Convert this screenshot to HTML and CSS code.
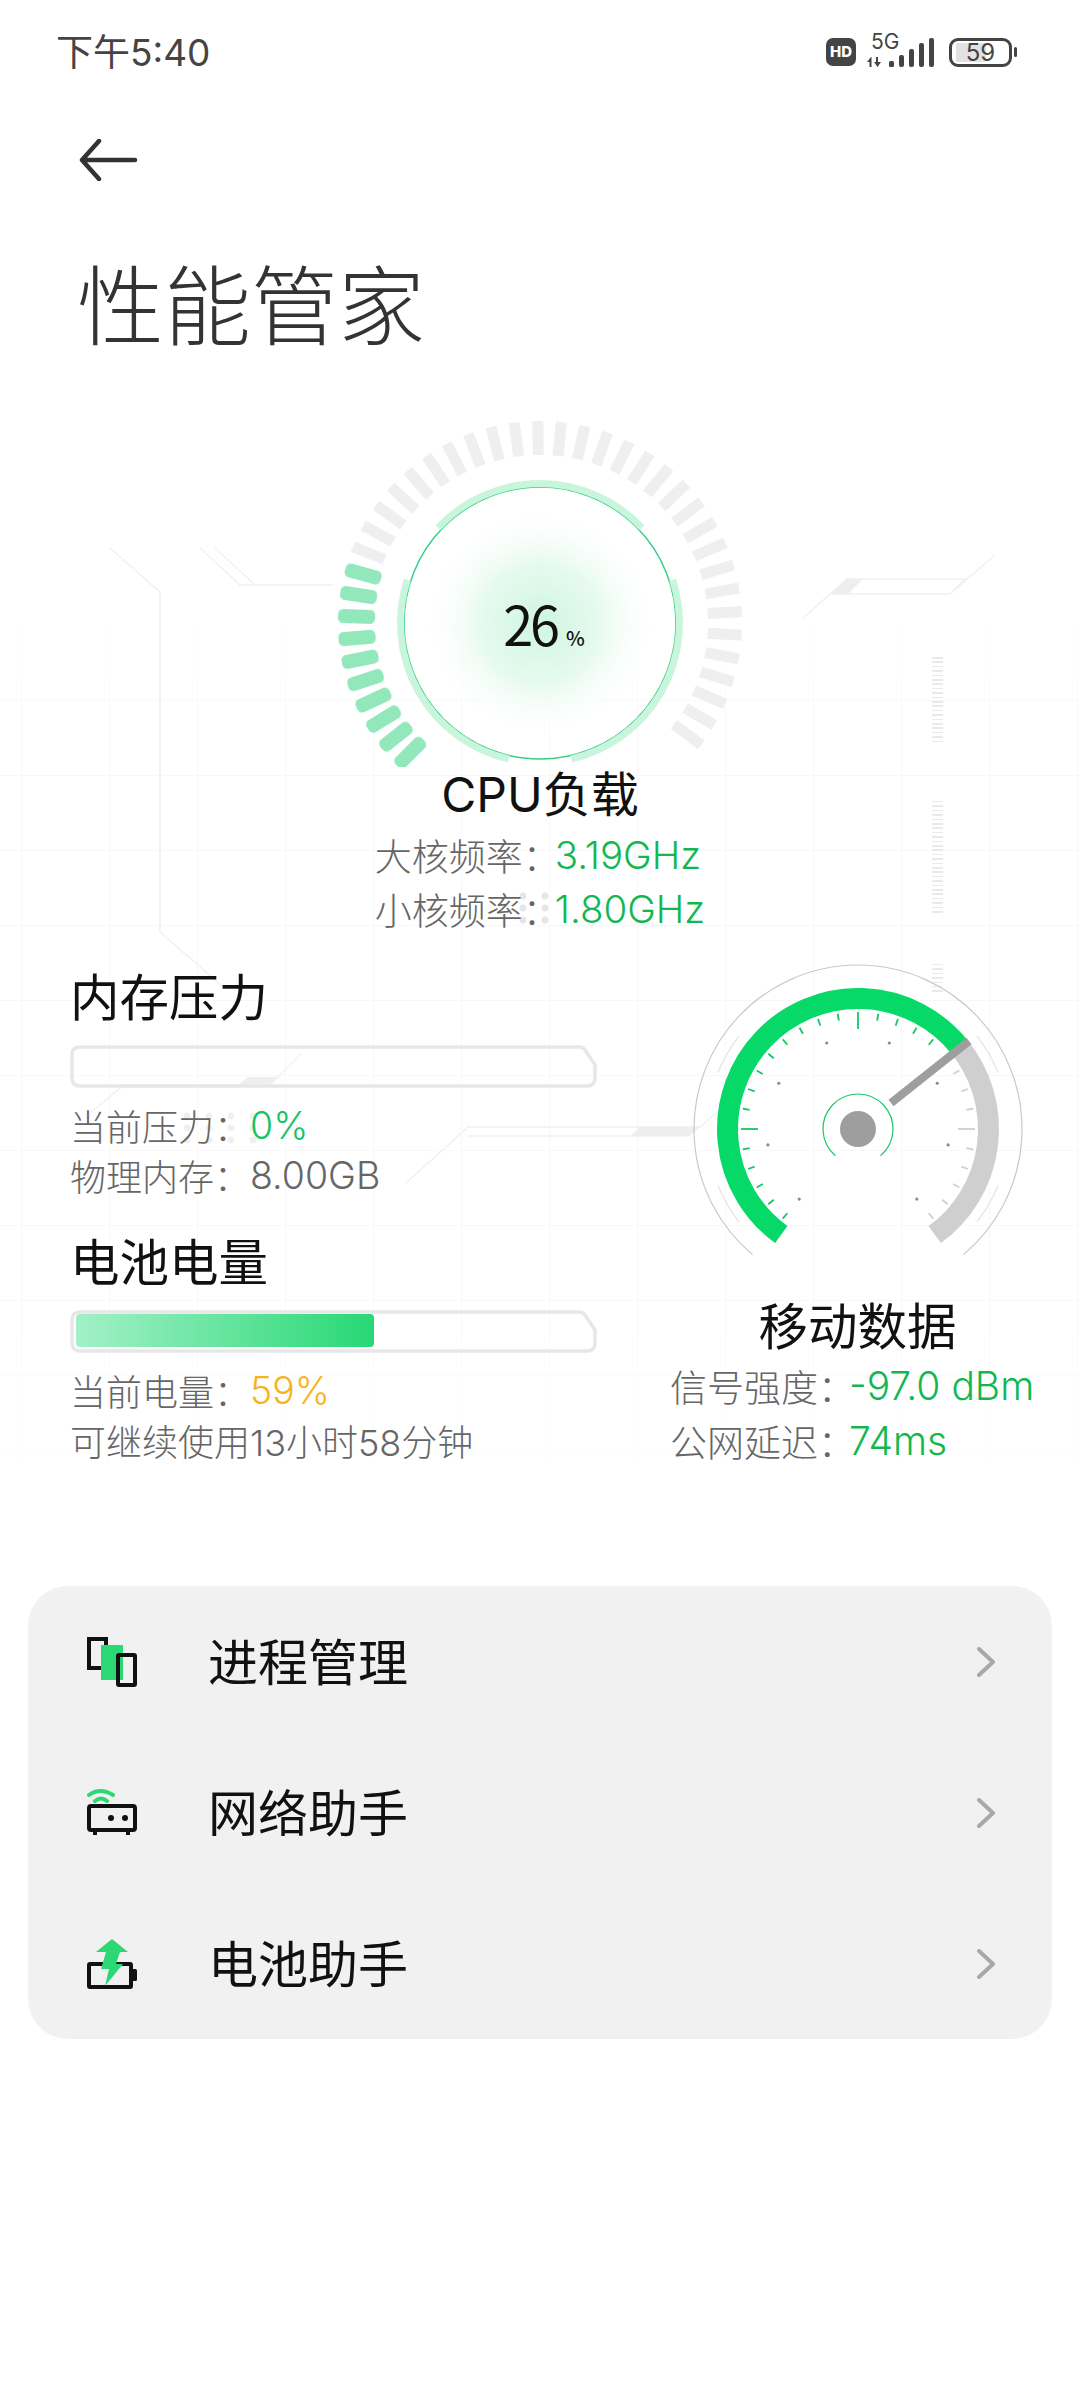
FILE: index.html
```html
<!DOCTYPE html>
<html lang="zh-CN">
<head>
    <meta charset="UTF-8">
    <meta name="viewport" content="width=device-width, initial-scale=1.0">
    <title>性能管家</title>
    <link rel="stylesheet" href="styles.css">
</head>
<body>

    <!-- Background decoration -->
    <div class="bg-grid"></div>
    <svg class="bg-lines" width="1080" height="1300" viewBox="0 0 1080 1300">
        <path d="M110 548 160 592V932L223 987"/>
        <path d="M200 548 240 585H333M215 548 255 585"/>
        <path d="M802 619 830 594H950L995 555M830 594 847 579H965L950 594"/>
        <path class="bg-fill" d="M830 594 847 579H863L848 594Z"/>
        <path d="M90 1113 124 1085H270L302 1053"/>
        <path class="bg-fill" d="M238 1085 248 1077H278L268 1085Z"/>
        <path d="M406 1183 468 1127H700L753 1080M468 1136H687"/>
        <path class="bg-fill" d="M630 1136 640 1127H700L690 1136Z"/>
    </svg>
    <div class="ruler ruler-a"></div>
    <div class="ruler ruler-b"></div>
    <div class="ruler ruler-c"></div>
    <div class="dots dots-cpu"></div>
    <div class="dots dots-mem"></div>

    <!-- Status bar -->
    <div class="status">
        <span class="status-time">下午5:40</span>
        <div class="status-icons">
            <span class="hd">HD</span>
            <svg class="signal" width="70" height="42" viewBox="0 -6 70 42">
                <text x="5" y="15">5G</text>
                <path d="M5 23 1 28H3.500V33H5.500V23ZM10 23V28H8L11.500 33 15 28H12V23Z"/>
                <rect x="23" y="27" width="5" height="6" rx="1.5"/>
                <rect x="33" y="21" width="5" height="12" rx="2"/>
                <rect x="43" y="15" width="5" height="18" rx="2"/>
                <rect x="53" y="9" width="5" height="24" rx="2"/>
                <rect x="63" y="4" width="5" height="29" rx="2"/>
            </svg>
            <div class="battery"><span class="battery-level"></span><span class="battery-num">59</span></div>
            <span class="battery-nub"></span>
        </div>
    </div>

    <!-- Header -->
    <div class="back">
        <svg width="60" height="42" viewBox="0 0 60 42">
            <path d="M20 2 3 21 20 40M3 21H56"/>
        </svg>
    </div>
    <h1 class="title">性能管家</h1>

    <!-- CPU -->
    <section class="cpu">
        <div class="cpu-gauge">
            <svg id="cpu-svg" width="440" height="347" viewBox="0 0 440 347">
                <defs>
                    <radialGradient id="glow">
                        <stop offset="0" stop-color="#cff5e0"/>
                        <stop offset="0.5" stop-color="#e6faef"/>
                        <stop offset="1" stop-color="#ffffff" stop-opacity="0"/>
                    </radialGradient>
                </defs>
                <circle cx="220" cy="203" r="118" fill="url(#glow)"/>
                <circle class="cpu-ring" cx="220" cy="203" r="136"/>
            </svg>
            <div class="cpu-value">26<small>%</small></div>
        </div>
        <h2 class="block-title">CPU负载</h2>
        <div class="cpu-stats">
            <div class="row"><span class="label label-cpu">大核频率：</span><span class="val green">3.19GHz</span></div>
            <div class="row"><span class="label label-cpu">小核频率：</span><span class="val green">1.80GHz</span></div>
        </div>
    </section>

    <!-- Memory, battery, network -->
    <section class="overview">
        <div class="left-col">
            <h2 class="block-title">内存压力</h2>
            <div class="bar">
                <svg class="bar-frame" width="527" height="43" viewBox="0 0 527 43">
                    <path d="M10 2H510Q513 2 515 5L525 20V33Q525 41 517 41H10Q2 41 2 33V10Q2 2 10 2Z"/>
                </svg>
            </div>
            <div class="row row-left"><span class="label">当前压力：</span><span class="val green-light">0%</span></div>
            <div class="row row-left"><span class="label">物理内存：</span><span class="val">8.00GB</span></div>

            <h2 class="block-title battery-title">电池电量</h2>
            <div class="bar">
                <svg class="bar-frame" width="527" height="43" viewBox="0 0 527 43">
                    <path d="M10 2H510Q513 2 515 5L525 20V33Q525 41 517 41H10Q2 41 2 33V10Q2 2 10 2Z"/>
                </svg>
                <div class="bar-fill" style="width: 298px"></div>
            </div>
            <div class="row row-left"><span class="label">当前电量：</span><span class="val orange">59%</span></div>
            <div class="row row-left"><span class="label">可继续使用13小时58分钟</span></div>
        </div>

        <div class="right-col">
            <svg id="net-svg" width="340" height="300" viewBox="0 0 340 300">
                <path id="net-outer" class="net-thin"/>
                <path id="net-green" class="net-arc green-arc"/>
                <path id="net-gray" class="net-arc gray-arc"/>
                <path id="net-hub-arc" class="hub-arc"/>
                <circle class="hub" cx="170" cy="168" r="18"/>
                <path class="needle" d="M203 142 281 80"/>
            </svg>
            <h2 class="block-title net-title">移动数据</h2>
            <div class="net-stats">
                <div class="row"><span class="label label-net">信号强度：</span><span class="val green">-97.0 dBm</span></div>
                <div class="row"><span class="label label-net">公网延迟：</span><span class="val green">74ms</span></div>
            </div>
        </div>
    </section>

    <!-- Tools -->
    <div class="card">
        <div class="card-row">
            <svg class="card-icon" width="50" height="50" viewBox="0 0 50 50">
                <rect class="i-fill" x="14" y="8" width="22" height="35"/>
                <path class="i-line" d="M14 31H2V2H19V8"/>
                <rect class="i-line" x="31" y="18" width="17" height="30" rx="1"/>
            </svg>
            <span class="card-label">进程管理</span>
            <svg class="chevron" width="20" height="30" viewBox="0 0 20 30"><path d="M2 2 16 15 2 28"/></svg>
        </div>
        <div class="card-row">
            <svg class="card-icon" width="50" height="50" viewBox="0 0 50 50">
                <path class="i-wifi" d="M2 7Q13 -1 26 7M8 13Q14 8 20 13"/>
                <rect class="i-line" x="2" y="18" width="46" height="24" rx="2"/>
                <circle class="i-dot" cx="24" cy="30" r="3"/>
                <circle class="i-dot" cx="38" cy="30" r="3"/>
                <path class="i-line" d="M8 42V47M41 42V47"/>
            </svg>
            <span class="card-label">网络助手</span>
            <svg class="chevron" width="20" height="30" viewBox="0 0 20 30"><path d="M2 2 16 15 2 28"/></svg>
        </div>
        <div class="card-row">
            <svg class="card-icon" width="50" height="50" viewBox="0 0 50 50">
                <rect class="i-line" x="2" y="25" width="42" height="23" rx="1"/>
                <rect class="i-dot" x="45" y="30" width="5" height="12" rx="1.5"/>
                <path class="i-fill" d="M25 0 41 13H33L29 25H36L18 47 22 30H14L19 13H9Z"/>
            </svg>
            <span class="card-label">电池助手</span>
            <svg class="chevron" width="20" height="30" viewBox="0 0 20 30"><path d="M2 2 16 15 2 28"/></svg>
        </div>
    </div>

    <script src="gauge.js"></script>
</body>
</html>
```

FILE: styles.css
```css
/* General */
html, body {
    margin: 0;
    padding: 0;
}
body {
    position: relative;
    width: 1080px;
    height: 2400px;
    overflow: hidden;
    background: #fff;
    color: #666;
    font-family: Inter, "Noto Sans CJK SC", sans-serif;
    font-weight: 300;
}
.status, .back, .title, .cpu, .overview, .card {
    position: relative;
}

/* Background decoration */
.bg-grid {
    position: absolute;
    left: 0;
    top: 610px;
    width: 1080px;
    height: 900px;
    background-image: linear-gradient(#f8f8f8 1px, transparent 1px), linear-gradient(90deg, #f8f8f8 1px, transparent 1px);
    background-size: 88px 75px;
    background-position: 21px 15px;
    -webkit-mask-image: linear-gradient(transparent, #000 12%, #000 75%, transparent);
    mask-image: linear-gradient(transparent, #000 12%, #000 75%, transparent);
}
.bg-lines {
    position: absolute;
    left: 0;
    top: 0;
}
.bg-lines path {
    fill: none;
    stroke: #f1f1f1;
    stroke-width: 1.5;
}
.bg-lines .bg-fill {
    fill: #eeeeee;
    stroke: none;
}
.ruler {
    position: absolute;
    left: 932px;
    width: 11px;
    background: repeating-linear-gradient(#e9e9e9 0, #e9e9e9 1.5px, transparent 1.5px, transparent 4.4px);
}
.ruler-a { top: 657px; height: 86px; }
.ruler-b { top: 801px; height: 113px; }
.ruler-c { top: 964px; height: 29px; }
.dots {
    position: absolute;
    background-image: radial-gradient(circle, #e6e6e6 0, #e6e6e6 3px, transparent 4px);
}
.dots-cpu {
    left: 512px;
    top: 890px;
    width: 44px;
    height: 36px;
    background-size: 22px 12px;
}
.dots-mem {
    left: 176px;
    top: 1110px;
    width: 80px;
    height: 34px;
    background-image: radial-gradient(circle, #f0f0f0 0, #f0f0f0 3px, transparent 4px);
    background-size: 22px 12px;
}

/* Status bar */
.status {
    display: flex;
    align-items: center;
    justify-content: space-between;
    height: 104px;
    padding: 0 63px 0 56px;
}
.status-time {
    margin-bottom: 5px;
    font-size: 37px;
    font-weight: 400;
    color: #444;
}
.status-icons {
    display: flex;
    align-items: center;
}
.hd {
    width: 30px;
    height: 28px;
    border-radius: 7px;
    background: #444;
    color: #fff;
    font-size: 15px;
    font-weight: 800;
    line-height: 28px;
    text-align: center;
}
.signal {
    margin: 0 0 6px 10px;
}
.signal text {
    font-size: 21px;
    font-weight: 400;
    fill: #444;
}
.signal path, .signal rect {
    fill: #444;
}
.battery {
    position: relative;
    box-sizing: border-box;
    width: 63px;
    height: 29px;
    margin-left: 13px;
    border: 3px solid #444;
    border-radius: 9px;
    font-size: 24px;
    line-height: 23px;
    text-align: center;
    color: #444;
}
.battery-level {
    position: absolute;
    left: 4px;
    top: 2px;
    bottom: 2px;
    width: 30px;
    border-radius: 2px;
    background: #e2e2e2;
}
.battery-num {
    position: relative;
    font-weight: 400;
}
.battery-nub {
    width: 3px;
    height: 10px;
    margin-left: 2px;
    border-radius: 2px;
    background: #444;
}

/* Header */
.back {
    display: flex;
    align-items: center;
    height: 112px;
    padding-left: 79px;
}
.back path {
    fill: none;
    stroke: #333;
    stroke-width: 4.5;
    stroke-linecap: round;
    stroke-linejoin: round;
}
.title {
    margin: 42px 0 0;
    padding-left: 77px;
    font-size: 87px;
    font-weight: 300;
    line-height: 100px;
    color: #333;
}

/* CPU */
.cpu {
    display: flex;
    flex-direction: column;
    align-items: center;
    margin-top: 62px;
}
.cpu-gauge {
    position: relative;
    width: 440px;
    height: 347px;
}
.cpu-gauge svg {
    display: block;
}
.cpu-ring {
    fill: none;
    stroke: #35cf85;
    stroke-width: 1.5;
}
.cpu-band {
    fill: none;
    stroke: #c9f5dd;
    stroke-width: 7;
}
.tick-on {
    fill: #93e8bb;
    filter: blur(0.5px);
}
.tick-off {
    fill: #efefef;
}
.cpu-value {
    position: absolute;
    left: 8px;
    right: 0;
    top: 170px;
    font-family: "Noto Sans CJK SC", sans-serif;
    font-size: 54px;
    font-weight: 400;
    line-height: 66px;
    letter-spacing: -3px;
    text-align: center;
    color: #111;
}
.cpu-value small {
    margin-left: 9px;
    font-size: 20px;
    font-weight: 500;
    letter-spacing: 0;
}
.block-title {
    margin: 0;
    font-size: 49.5px;
    font-weight: 400;
    line-height: 60px;
    color: #111;
}
.cpu .block-title {
    font-size: 48px;
    line-height: 56px;
}
.cpu-stats {
    margin-top: 5px;
}
.row {
    display: flex;
    align-items: center;
    height: 54px;
    font-size: 37px;
    white-space: nowrap;
}
.label {
    flex: none;
    color: #666;
}
.label-cpu {
    width: 180px;
}
.label-net {
    width: 179px;
}
.val {
    font-size: 38.500px;
    color: #666;
}
.green { color: #12b84f; }
.green-light { color: #16c464; }
.orange { color: #f6b41c; }

/* Memory, battery, network */
.overview {
    display: flex;
    height: 519px;
    margin-top: 25px;
}
.left-col {
    box-sizing: border-box;
    width: 640px;
    padding: 7px 0 0 70px;
}
.bar {
    position: relative;
    box-sizing: border-box;
    width: 527px;
    height: 43px;
    margin: 17px 0 12px;
    padding: 4px 6px;
}
.bar-frame {
    position: absolute;
    left: 0;
    top: 0;
}
.bar-frame path {
    fill: none;
    stroke: #e7e7e7;
    stroke-width: 3.5;
}
.bar-fill {
    box-sizing: border-box;
    height: 33px;
    border-radius: 4px;
    background: linear-gradient(90deg, #a3f0c7, #27d875);
}
.battery-title {
    margin-top: 33px;
}
.left-col .row {
    height: 50px;
    font-size: 36px;
}
.left-col .label {
    min-width: 180px;
}
.left-col .val {
    font-size: 37.500px;
}
.right-col {
    display: flex;
    flex-direction: column;
    align-items: center;
    width: 435px;
}
#net-svg {
    display: block;
}
.net-thin {
    fill: none;
    stroke: #c9c9c9;
    stroke-width: 1.2;
}
.net-faint {
    fill: none;
    stroke: #e4e4e4;
    stroke-width: 1.2;
}
.net-arc {
    fill: none;
    stroke-width: 21;
}
.green-arc { stroke: #06d968; }
.gray-arc { stroke: #cfcfcf; }
.hub-arc {
    fill: none;
    stroke: #19c866;
    stroke-width: 1.2;
}
.hub { fill: #9e9e9e; }
.needle {
    fill: none;
    stroke: #9e9e9e;
    stroke-width: 8;
}
.net-dot { fill: #8a8a8a; }
.net-tick-green {
    stroke: #12c865;
    stroke-width: 1.8;
}
.net-tick-gray {
    stroke: #cfcfcf;
    stroke-width: 1.8;
}
.net-title {
    margin-top: 36px;
}
.net-stats {
    align-self: flex-start;
    margin: 1px 0 0 30px;
}
.net-stats .row {
    height: 55px;
}
.net-stats .val {
    font-size: 39px;
}

/* Tools */
.card {
    margin: 106px 28px 0;
    border-radius: 40px;
    background: #f1f1f1;
}
.card-row {
    display: flex;
    align-items: center;
    height: 151px;
    padding: 0 55px 0 59px;
}
.card-label {
    margin: 0 0 5px 71px;
    font-size: 50px;
    font-weight: 400;
    color: #111;
}
.chevron {
    margin-left: auto;
}
.chevron path {
    fill: none;
    stroke: #a8a8a8;
    stroke-width: 4;
    stroke-linecap: round;
    stroke-linejoin: round;
}
.i-line {
    fill: none;
    stroke: #111;
    stroke-width: 4;
}
.i-dot { fill: #111; }
.i-fill { fill: #2cd873; }
.i-wifi {
    fill: none;
    stroke: #2cd873;
    stroke-width: 4;
    stroke-linecap: round;
}
```

FILE: gauge.js
```js
// Draws the ticks and arcs of the two gauges
const SVG_NS = "http://www.w3.org/2000/svg";

function add(svg, tag, attrs) {
    const el = document.createElementNS(SVG_NS, tag);
    for (const key in attrs) el.setAttribute(key, attrs[key]);
    svg.appendChild(el);
    return el;
}

function point(cx, cy, r, deg) {
    const a = (deg - 90) * Math.PI / 180;
    return [cx + r * Math.cos(a), cy + r * Math.sin(a)];
}

// Angles are clockwise from 12 o'clock
function arc(cx, cy, r, from, to) {
    const [x1, y1] = point(cx, cy, r, from);
    const [x2, y2] = point(cx, cy, r, to);
    const large = to - from > 180 ? 1 : 0;
    return `M${x1} ${y1}A${r} ${r} 0 ${large} 1 ${x2} ${y2}`;
}

// CPU gauge
const cpu = document.getElementById("cpu-svg");
const CX = 220, CY = 203;
[[-47, 47], [72, 167], [-167, -72]].forEach(([from, to]) => {
    add(cpu, "path", { class: "cpu-band", d: arc(CX, CY, 139.5, from, to) });
});
for (let k = 0; k < 40; k++) {
    const deg = -135 + 6.72 * k;
    const on = k < 10;
    const w = on ? 14 : 11;
    const h = on ? 37 : 34;
    add(cpu, "rect", {
        class: on ? "tick-on" : "tick-off",
        x: CX - w / 2,
        y: CY - 202,
        width: w,
        height: h,
        rx: on ? 5 : 0,
        transform: `rotate(${deg} ${CX} ${CY})`
    });
}

// Network gauge
const net = document.getElementById("net-svg");
const NX = 170, NY = 168;
document.getElementById("net-outer").setAttribute("d", arc(NX, NY, 164, -140, 140));
document.getElementById("net-green").setAttribute("d", arc(NX, NY, 130.5, -144, 51));
document.getElementById("net-gray").setAttribute("d", arc(NX, NY, 130.5, 51, 144));
document.getElementById("net-hub-arc").setAttribute("d", arc(NX, NY, 35, -140, 140));

[[-68, -52], [52, 68], [-128, -112], [112, 128]].forEach(([from, to]) => {
    add(net, "path", { class: "net-faint", d: arc(NX, NY, 151, from, to) });
});
for (let deg = -140; deg <= 140; deg += 10) {
    if (deg === 50) continue;
    const long = deg % 90 === 0;
    const [x1, y1] = point(NX, NY, long ? 100 : 110, deg);
    const [x2, y2] = point(NX, NY, 117, deg);
    add(net, "line", {
        class: deg < 50 ? "net-tick-green" : "net-tick-gray",
        x1: x1, y1: y1, x2: x2, y2: y2
    });
}
for (let deg = -140; deg <= 140; deg += 40) {
    const [x, y] = point(NX, NY, 91.5, deg);
    add(net, "circle", { class: "net-dot", cx: x, cy: y, r: 1.6 });
}
```
